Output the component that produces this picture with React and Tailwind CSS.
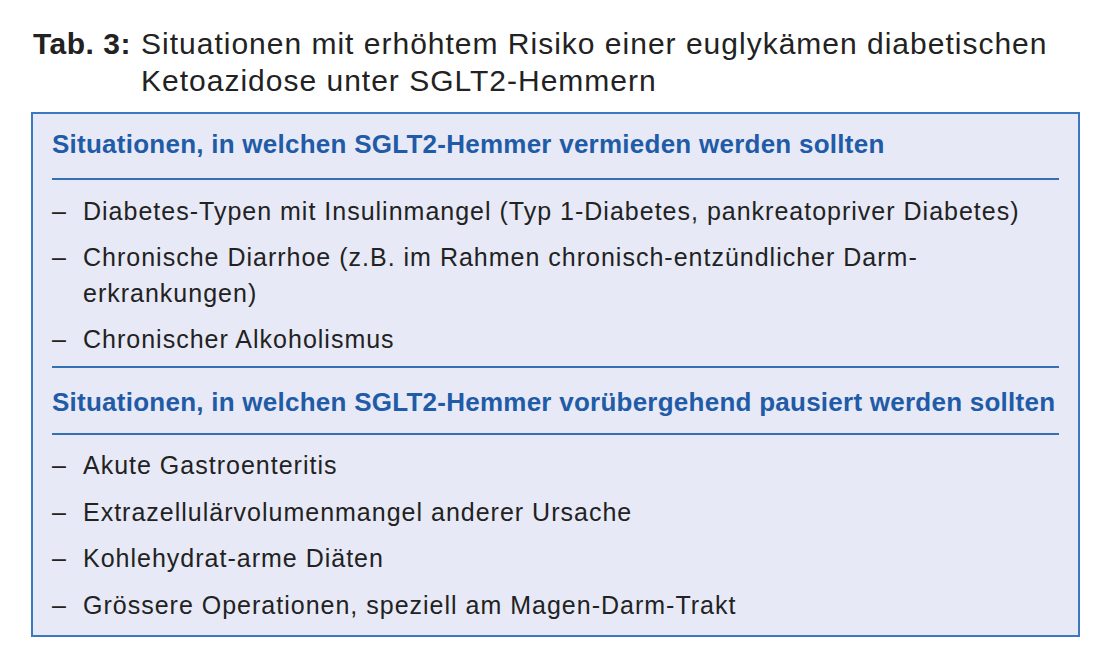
import React from "react";

const font = { fontFamily: '"Liberation Sans", Arial, sans-serif' };

function Item({ children }) {
  return (
    <li className="flex leading-[35.5px] text-[25px] tracking-[1px] text-[#222222]">
      <span className="w-[31px] shrink-0 tracking-normal">–</span>
      <span>{children}</span>
    </li>
  );
}

export default function App() {
  const list1 = [
    "Diabetes-Typen mit Insulinmangel (Typ 1-Diabetes, pankreatopriver Diabetes)",
    <>Chronische Diarrhoe (z.B. im Rahmen chronisch-entzündlicher Darm-<br />erkrankungen)</>,
    "Chronischer Alkoholismus",
  ];
  const list2 = [
    "Akute Gastroenteritis",
    "Extrazellulärvolumenmangel anderer Ursache",
    "Kohlehydrat-arme Diäten",
    "Grössere Operationen, speziell am Magen-Darm-Trakt",
  ];
  return (
    <div className="w-[1100px] h-[667px] bg-white pl-[31px] pt-[25px]" style={font}>
      <div className="ml-[2px] flex text-[30px] leading-[37px] tracking-[1px] text-[#222222]">
        <span className="w-[108px] shrink-0 font-bold tracking-[0.5px]">Tab. 3:</span>
        <span>
          Situationen mit erhöhtem Risiko einer euglykämen diabetischen
          <br />
          Ketoazidose unter SGLT2-Hemmern
        </span>
      </div>
      <div className="mt-[13px] w-[1049px] border-2 border-[#3a78bf] bg-[#e7e9f6] px-[19px] pb-[11.5px]">
        <div className="pt-[11.5px] pb-[16.5px] text-[26px] leading-[36px] tracking-[0.25px] font-bold text-[#1f5ba6]">
          Situationen, in welchen SGLT2-Hemmer vermieden werden sollten
        </div>
        <div className="h-[2px] bg-[#3570b5]" />
        <ul className="flex flex-col gap-[11px] pt-[13.5px] pb-[8.5px]">
          {list1.map((t, i) => (
            <Item key={i}>{t}</Item>
          ))}
        </ul>
        <div className="h-[2px] bg-[#3570b5]" />
        <div className="pt-[15.5px] pb-[13.5px] text-[26px] leading-[36px] tracking-[0.25px] font-bold text-[#1f5ba6]">
          Situationen, in welchen SGLT2-Hemmer vorübergehend pausiert werden sollten
        </div>
        <div className="h-[2px] bg-[#3570b5]" />
        <ul className="flex flex-col gap-[11px] pt-[13px]">
          {list2.map((t, i) => (
            <Item key={i}>{t}</Item>
          ))}
        </ul>
      </div>
    </div>
  );
}
